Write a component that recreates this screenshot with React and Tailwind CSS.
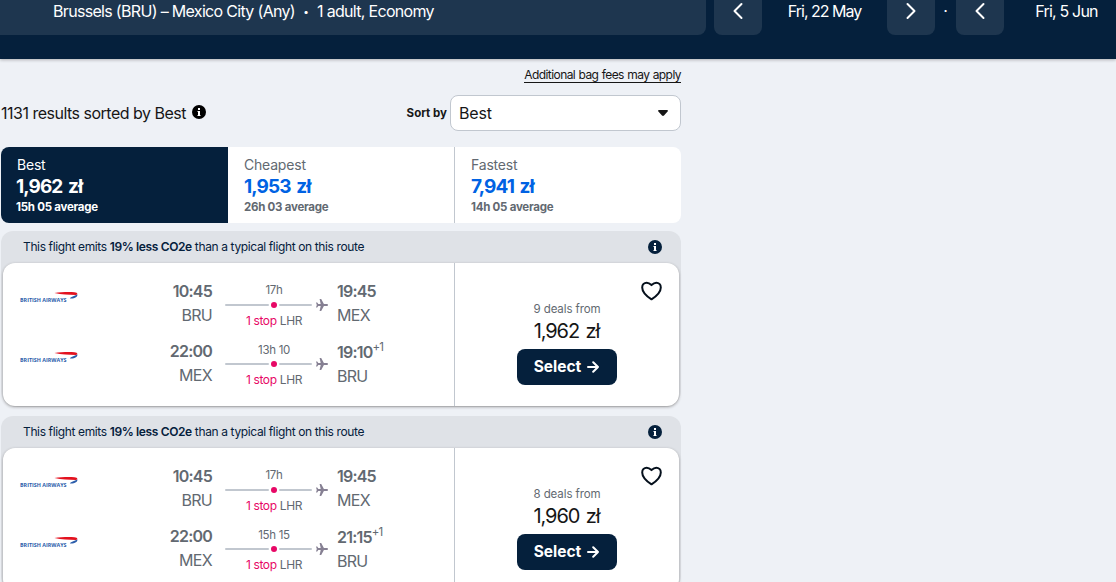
const tabs = [
  { label: 'Best', price: '1,962 zł', average: '15h 05 average', active: true },
  { label: 'Cheapest', price: '1,953 zł', average: '26h 03 average' },
  { label: 'Fastest', price: '7,941 zł', average: '14h 05 average', divider: true }
]

const results = [
  {
    id: 1,
    deals: '9 deals from',
    price: '1,962 zł',
    legs: [
      { depart: '10:45', from: 'BRU', duration: '17h', arrive: '19:45', to: 'MEX' },
      { depart: '22:00', from: 'MEX', duration: '13h 10', arrive: '19:10', to: 'BRU', nextDay: true }
    ]
  },
  {
    id: 2,
    deals: '8 deals from',
    price: '1,960 zł',
    legs: [
      { depart: '10:45', from: 'BRU', duration: '17h', arrive: '19:45', to: 'MEX' },
      { depart: '22:00', from: 'MEX', duration: '15h 15', arrive: '21:15', to: 'BRU', nextDay: true }
    ]
  }
]

function InfoIcon({ className }) {
  return (
    <svg className={className} width="14" height="14" viewBox="0 0 14 14">
      <circle cx="7" cy="7" r="7" fill="currentColor" />
      <path d="M6 3h2v2H6zM5.5 6H8v4h.5v1h-3v-1H6V7h-.5z" fill="#fff" />
    </svg>
  )
}

function Chevron({ right }) {
  return (
    <svg className={right ? 'rotate-180' : ''} width="12" height="18" viewBox="0 0 12 18" fill="none" stroke="#fff" strokeWidth="2" strokeLinecap="round" strokeLinejoin="round">
      <path d="M9.5 2 2.5 9l7 7" />
    </svg>
  )
}

function DateButton({ right, className }) {
  return (
    <button className={`w-12 h-[35px] shrink-0 rounded-b-lg bg-[#1e364f] flex justify-center pt-0.5 ${className || ''}`}>
      <Chevron right={right} />
    </button>
  )
}

function AirlineLogo() {
  return (
    <svg width="60" height="14" viewBox="0 0 60 14">
      <text x="1" y="10.6" fontFamily="Open Sans, sans-serif" fontSize="5.6" fontWeight="700" fill="#2a5caa" textLength="46.5" lengthAdjust="spacingAndGlyphs">BRITISH AIRWAYS</text>
      <path d="M35.500 2c6-.9 13-1 20-.8 1.700.1 2.800.6 2.900 2-.5.5-1 .7-1.700.7-7-.5-14-.1-21.200-1.900z" fill="#e3121f" />
      <path d="M58.400 3.500c.3 2.400-2.200 4.200-7.500 4 .3-1.300 3.200-2.300 7.500-4z" fill="#2a5caa" />
    </svg>
  )
}

function Plane() {
  return (
    <svg width="12" height="12" viewBox="0 0 12 12" fill="#868093">
      <path d="M12 6c0-.6-.6-1-1.300-1H7.900L5.200 0H3.600l1.100 4.900H2.300L1.200 3.400H0L.8 6 0 8.600h1.200L2.300 7.100h2.400L3.600 12h1.600l2.700-5h2.800c.7 0 1.300-.4 1.300-1z" />
    </svg>
  )
}

function Leg({ leg, second }) {
  return (
    <div className={`flex ${second ? 'h-[59px]' : 'h-[60px]'}`}>
      <div className="w-[151px] pl-4 pt-3">
        <AirlineLogo />
      </div>
      <div className="w-[58px] text-right text-[#626971]">
        <p className="text-base leading-6 font-semibold tracking-[-0.8px]">{leg.depart}</p>
        <p className="text-base leading-6 tracking-[-0.7px]">{leg.from}</p>
      </div>
      <div className="w-[103px] ml-[13px]">
        <p className="text-[11.500px] leading-4 pt-[3px] pr-[5px] text-center text-[#626971] tracking-[-0.3px]">{leg.duration}</p>
        <div className={`flex h-3 items-center ${second ? 'mt-0' : 'mt-px'}`}>
          <span className="w-11 h-0.5 rounded-full bg-[#c1c7cf]" />
          <span className="size-1.5 mx-[2px] rounded-full bg-[#e70866]" />
          <span className="w-[33px] h-0.5 rounded-full bg-[#c1c7cf]" />
          <span className="ml-1">
            <Plane />
          </span>
        </div>
        <p className="text-[12px] leading-4 mt-[2px] pr-[5px] text-center text-[#626971] tracking-[-0.35px]">
          <span className="text-[#e70866]">1 stop</span> LHR
        </p>
      </div>
      <div className={`ml-[9px] text-[#626971] ${second ? 'pt-px' : ''}`}>
        <p className="flex text-base leading-6 font-semibold tracking-[-0.8px]">
          {leg.arrive}
          {leg.nextDay && <span className="text-[11.500px] leading-[15px] font-normal">+1</span>}
        </p>
        <p className="text-base leading-6 tracking-[-0.7px]">{leg.to}</p>
      </div>
    </div>
  )
}

function Ticket({ result }) {
  return (
    <div className="w-[680px] h-[176px] rounded-xl rounded-b-2xl bg-[#dfe2e7] mb-[9px] flex flex-col">
      <div className="h-8 shrink-0 flex items-center justify-between pl-[22px] pr-[19px] text-[#05203c]">
        <p className="text-[12px] tracking-[-0.37px]">
          This flight emits <b className="font-semibold">19% less CO2e</b> than a typical flight on this route
        </p>
        <InfoIcon />
      </div>
      <div className="h-[143px] mx-[2px] flex rounded-xl bg-white shadow-[0_1px_3px_0_rgba(37,32,31,0.4)]">
        <div className="w-[452px] pt-4 border-r border-[#c1c7cf]">
          <Leg leg={result.legs[0]} />
          <Leg leg={result.legs[1]} second />
        </div>
        <div className="flex-1 relative flex flex-col items-center pt-[38px]">
          <svg className="absolute right-[17px] top-[18px]" width="21" height="20" viewBox="0 0 21 20" fill="none" stroke="#05101c" strokeWidth="2" strokeLinejoin="round">
            <path d="M10.500 18.300C8.500 17 1.200 11.800 1.200 6.400 1.200 3.600 3.200 1.700 5.700 1.700c2 0 3.200.9 4.800 2.400 1.600-1.500 2.800-2.400 4.800-2.400 2.500 0 4.500 1.900 4.500 4.700 0 5.400-7.300 10.600-9.300 11.900z" />
          </svg>
          <p className="text-[11.500px] leading-4 text-[#626971] tracking-[-0.1px]">{result.deals}</p>
          <p className="mr-px text-xl leading-7 text-[#161616] tracking-[-1.100px] [word-spacing:2px]">{result.price}</p>
          <button className="mt-1 mr-px w-[100px] h-9 rounded-lg bg-[#05203c] text-white text-[15.500px] font-bold flex items-center justify-center gap-1.5">
            Select
            <svg width="12" height="12" viewBox="0 0 12 12" fill="none" stroke="currentColor" strokeWidth="2" strokeLinecap="round" strokeLinejoin="round">
              <path d="M1 6h10M6.200 1.200 11 6l-4.800 4.800" />
            </svg>
          </button>
        </div>
      </div>
    </div>
  )
}

export default function App() {
  return (
    <div className="w-[1116px] h-[582px] overflow-hidden bg-[#eef1f6] text-[#161616] font-['Inter','Liberation_Sans',sans-serif] whitespace-nowrap">
      <header className="h-[59px] bg-[#05203c] flex text-white text-base leading-[23px] shadow-[0_1px_3px_0_rgba(37,32,31,0.3)]">
        <div className="w-[706px] h-[35px] shrink-0 rounded-br-lg bg-[#1e364f] pl-[53px] flex">
          <p className="tracking-[-0.68px]">Brussels (BRU) – Mexico City (Any)</p>
          <p className="w-[22px] text-center text-[10px]">•</p>
          <p className="tracking-[-0.69px]">1 adult, Economy</p>
        </div>
        <DateButton className="ml-2" />
        <p className="w-[125px] shrink-0 text-center tracking-[-1px]">Fri, 22 May</p>
        <DateButton right />
        <p className="w-[21px] shrink-0 text-center">·</p>
        <DateButton />
        <p className="w-[125px] shrink-0 text-center tracking-[-0.8px]">Fri, 5 Jun</p>
      </header>

      <main className="w-[681px] pl-px">
        <div className="h-9 pt-2 flex justify-end">
          <a className="h-4 text-[12px] leading-4 border-b border-[#161616] tracking-[-0.56px] [word-spacing:0.5px]">Additional bag fees may apply</a>
        </div>
        <div className="h-9 flex items-center">
          <p className="text-base tracking-[-0.5px]">1131 results sorted by Best</p>
          <InfoIcon className="ml-1.5 mb-0.5 text-black" />
          <span className="ml-auto text-[11.500px] leading-4 font-bold">Sort by</span>
          <div className="ml-[3px] w-[231px] h-9 pl-2 pr-3 flex items-center justify-between rounded-lg border border-[#c1c7cf] bg-white text-base tracking-[-0.2px]">
            Best
            <svg width="10" height="6" viewBox="0 0 10 6" fill="#161616">
              <path d="M1 0h8c1 0 1.200.9.6 1.500L6 5.500c-.6.600-1.400.600-2 0L.4 1.500C-.2.900 0 0 1 0z" />
            </svg>
          </div>
        </div>

        <div className="mt-4 h-[76px] flex rounded-lg overflow-hidden bg-white">
          {tabs.map(tab => (
            <div
              key={tab.label}
              className={`pt-2 ${tab.active ? 'w-[227px] pl-[15px] bg-[#05203c] text-white' : 'w-[226px] pl-4 text-[#626971]'} ${tab.divider ? 'border-l border-[#c1c7cf]' : ''}`}
            >
              <p className={`text-sm leading-5 tracking-[-0.2px] ${tab.active ? 'pl-px' : ''}`}>{tab.label}</p>
              <p className={`text-[19px] leading-6 font-bold tracking-[-0.9px] [word-spacing:2px] ${tab.active ? '' : 'text-[#0062e3]'}`}>{tab.price}</p>
              <p className="text-[11.500px] leading-4 font-bold tracking-[-0.25px]">{tab.average}</p>
            </div>
          ))}
        </div>

        <div className="mt-2">
          {results.map(r => (
            <Ticket key={r.id} result={r} />
          ))}
        </div>
      </main>
    </div>
  )
}
